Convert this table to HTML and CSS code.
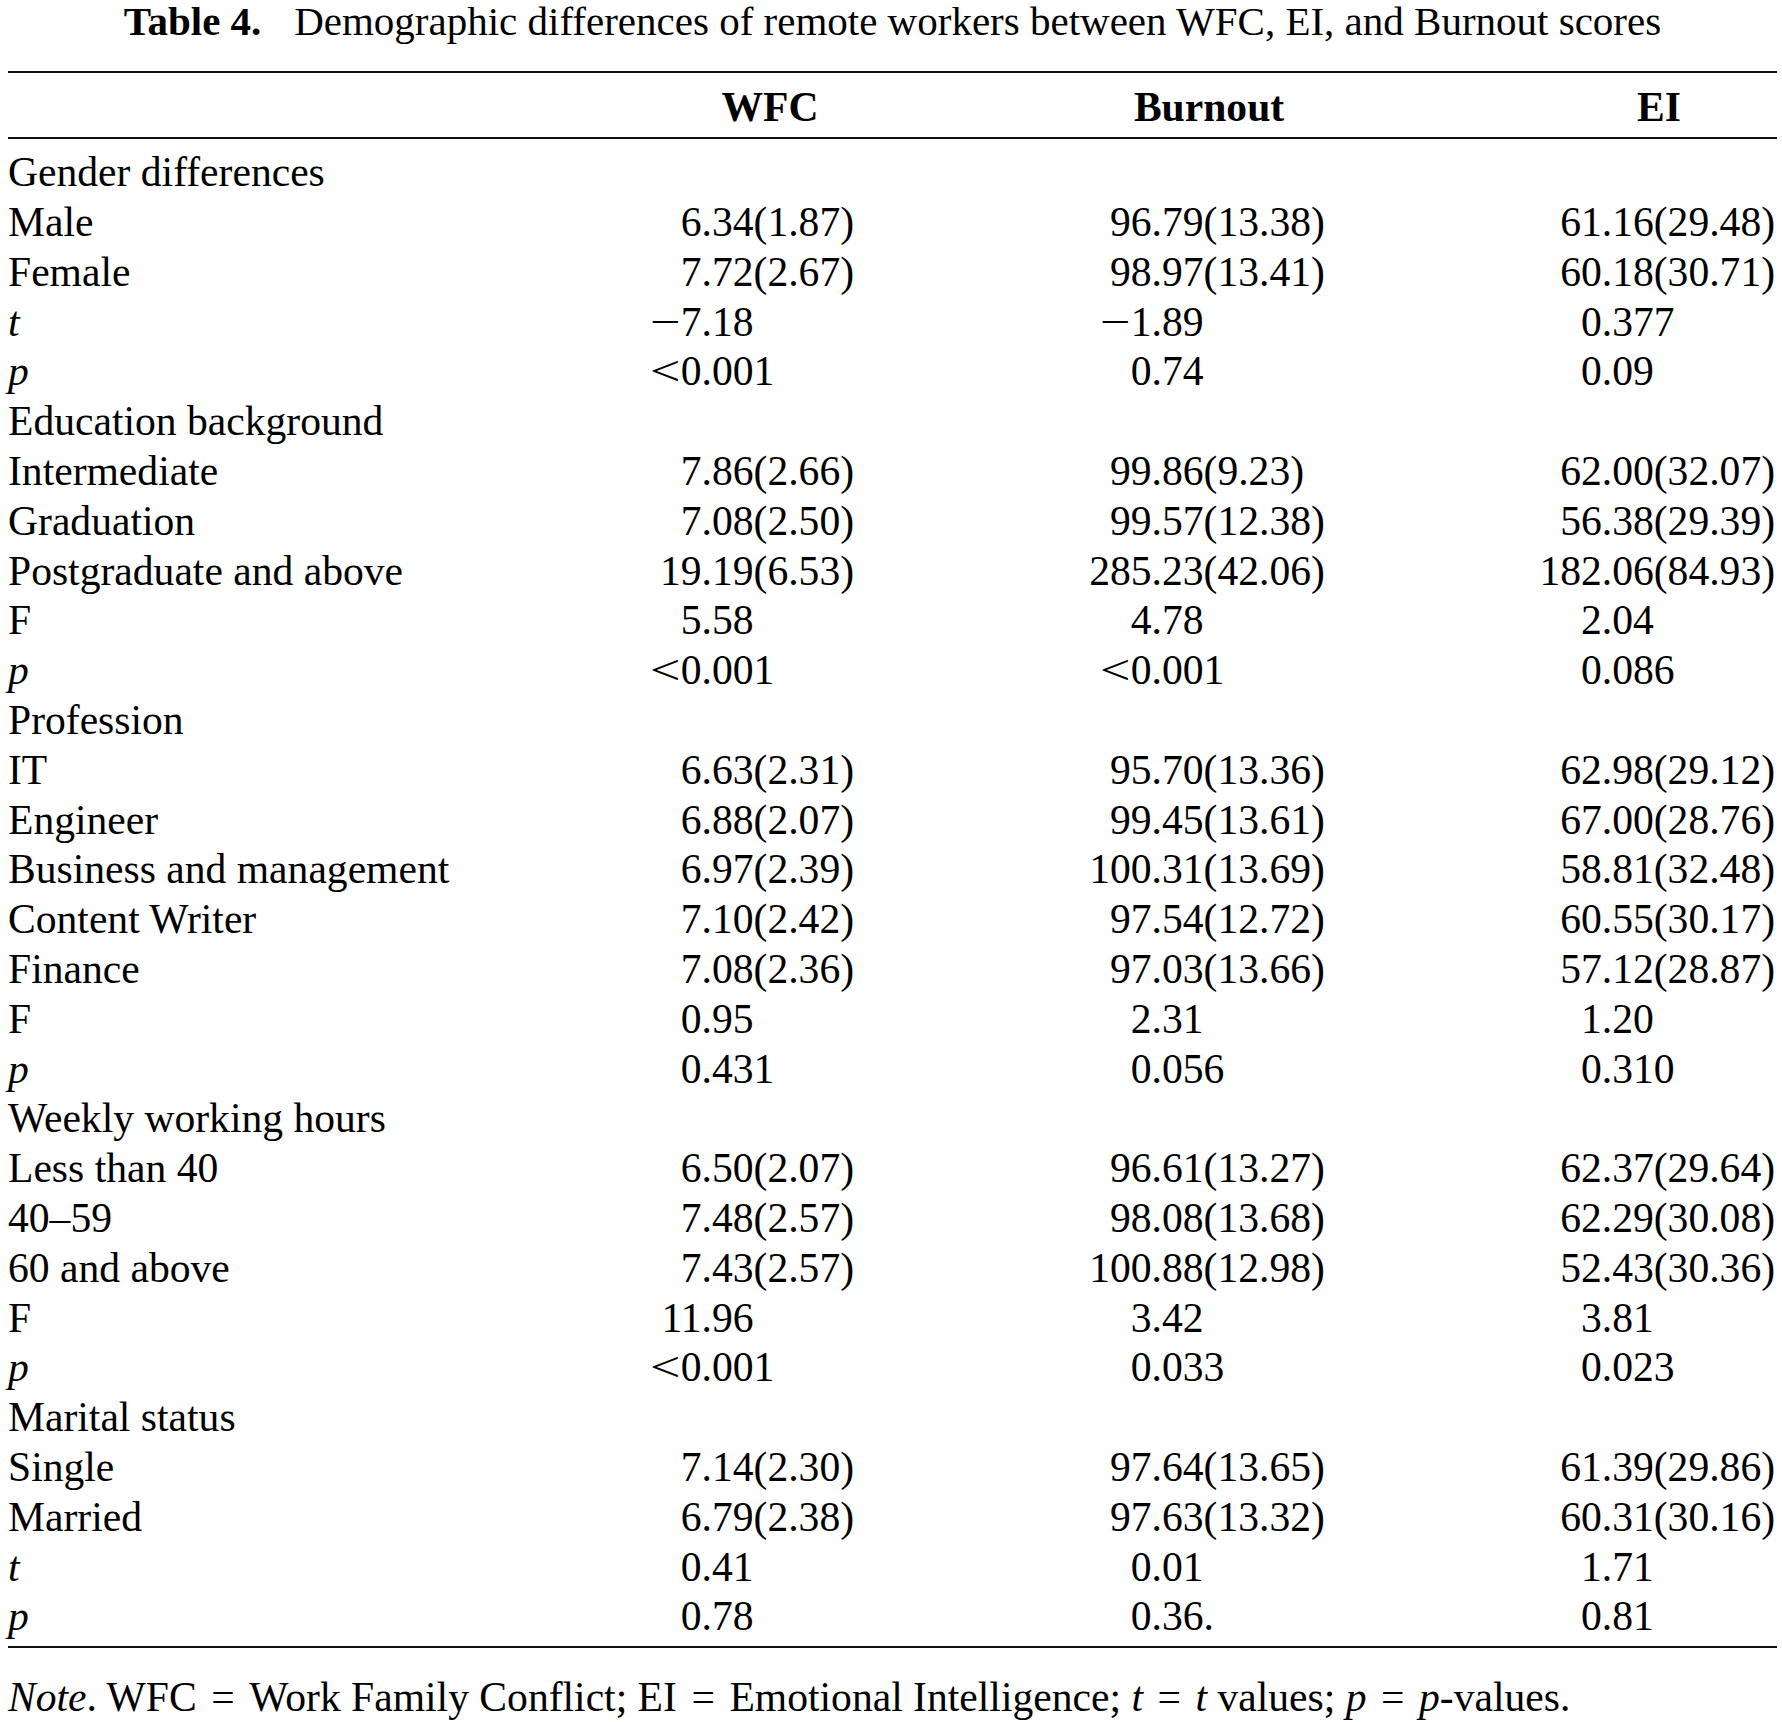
FILE: index.html
```html
<!DOCTYPE html>
<html lang="en">
<head>
<meta charset="utf-8">
<title>Table 4</title>
<link rel="stylesheet" href="styles.css">
</head>
<body>
<div class="page">
  <div class="caption"><b class="cap-label">Table 4.</b> Demographic differences of remote workers between WFC, EI, and Burnout scores</div>
  <div class="table">
    <div class="head">
      <div class="row">
        <div></div>
        <div class="h h-wfc">WFC</div>
        <div class="h h-bo">Burnout</div>
        <div class="h h-ei">EI</div>
      </div>
    </div>
    <div class="body">
      <div class="row"><div class="lab">Gender differences</div><div></div><div></div><div></div></div>
      <div class="row"><div class="lab">Male</div><div class="v"><span class="n">6</span>.34(1.87)</div><div class="v"><span class="n">96</span>.79(13.38)</div><div class="v"><span class="n">61</span>.16(29.48)</div></div>
      <div class="row"><div class="lab">Female</div><div class="v"><span class="n">7</span>.72(2.67)</div><div class="v"><span class="n">98</span>.97(13.41)</div><div class="v"><span class="n">60</span>.18(30.71)</div></div>
      <div class="row"><div class="lab"><i>t</i></div><div class="v"><span class="n"><span class="s">&minus;</span>7</span>.18</div><div class="v"><span class="n"><span class="s">&minus;</span>1</span>.89</div><div class="v"><span class="n">0</span>.377</div></div>
      <div class="row"><div class="lab"><i>p</i></div><div class="v"><span class="n"><span class="s">&lt;</span>0</span>.001</div><div class="v"><span class="n">0</span>.74</div><div class="v"><span class="n">0</span>.09</div></div>

      <div class="row"><div class="lab">Education background</div><div></div><div></div><div></div></div>
      <div class="row"><div class="lab">Intermediate</div><div class="v"><span class="n">7</span>.86(2.66)</div><div class="v"><span class="n">99</span>.86(9.23)</div><div class="v"><span class="n">62</span>.00(32.07)</div></div>
      <div class="row"><div class="lab">Graduation</div><div class="v"><span class="n">7</span>.08(2.50)</div><div class="v"><span class="n">99</span>.57(12.38)</div><div class="v"><span class="n">56</span>.38(29.39)</div></div>
      <div class="row"><div class="lab">Postgraduate and above</div><div class="v"><span class="n">19</span>.19(6.53)</div><div class="v"><span class="n">285</span>.23(42.06)</div><div class="v"><span class="n">182</span>.06(84.93)</div></div>
      <div class="row"><div class="lab">F</div><div class="v"><span class="n">5</span>.58</div><div class="v"><span class="n">4</span>.78</div><div class="v"><span class="n">2</span>.04</div></div>
      <div class="row"><div class="lab"><i>p</i></div><div class="v"><span class="n"><span class="s">&lt;</span>0</span>.001</div><div class="v"><span class="n"><span class="s">&lt;</span>0</span>.001</div><div class="v"><span class="n">0</span>.086</div></div>

      <div class="row"><div class="lab">Profession</div><div></div><div></div><div></div></div>
      <div class="row"><div class="lab">IT</div><div class="v"><span class="n">6</span>.63(2.31)</div><div class="v"><span class="n">95</span>.70(13.36)</div><div class="v"><span class="n">62</span>.98(29.12)</div></div>
      <div class="row"><div class="lab">Engineer</div><div class="v"><span class="n">6</span>.88(2.07)</div><div class="v"><span class="n">99</span>.45(13.61)</div><div class="v"><span class="n">67</span>.00(28.76)</div></div>
      <div class="row"><div class="lab">Business and management</div><div class="v"><span class="n">6</span>.97(2.39)</div><div class="v"><span class="n">100</span>.31(13.69)</div><div class="v"><span class="n">58</span>.81(32.48)</div></div>
      <div class="row"><div class="lab">Content Writer</div><div class="v"><span class="n">7</span>.10(2.42)</div><div class="v"><span class="n">97</span>.54(12.72)</div><div class="v"><span class="n">60</span>.55(30.17)</div></div>
      <div class="row"><div class="lab">Finance</div><div class="v"><span class="n">7</span>.08(2.36)</div><div class="v"><span class="n">97</span>.03(13.66)</div><div class="v"><span class="n">57</span>.12(28.87)</div></div>
      <div class="row"><div class="lab">F</div><div class="v"><span class="n">0</span>.95</div><div class="v"><span class="n">2</span>.31</div><div class="v"><span class="n">1</span>.20</div></div>
      <div class="row"><div class="lab"><i>p</i></div><div class="v"><span class="n">0</span>.431</div><div class="v"><span class="n">0</span>.056</div><div class="v"><span class="n">0</span>.310</div></div>

      <div class="row"><div class="lab">Weekly working hours</div><div></div><div></div><div></div></div>
      <div class="row"><div class="lab">Less than 40</div><div class="v"><span class="n">6</span>.50(2.07)</div><div class="v"><span class="n">96</span>.61(13.27)</div><div class="v"><span class="n">62</span>.37(29.64)</div></div>
      <div class="row"><div class="lab">40&ndash;59</div><div class="v"><span class="n">7</span>.48(2.57)</div><div class="v"><span class="n">98</span>.08(13.68)</div><div class="v"><span class="n">62</span>.29(30.08)</div></div>
      <div class="row"><div class="lab">60 and above</div><div class="v"><span class="n">7</span>.43(2.57)</div><div class="v"><span class="n">100</span>.88(12.98)</div><div class="v"><span class="n">52</span>.43(30.36)</div></div>
      <div class="row"><div class="lab">F</div><div class="v"><span class="n">11</span>.96</div><div class="v"><span class="n">3</span>.42</div><div class="v"><span class="n">3</span>.81</div></div>
      <div class="row"><div class="lab"><i>p</i></div><div class="v"><span class="n"><span class="s">&lt;</span>0</span>.001</div><div class="v"><span class="n">0</span>.033</div><div class="v"><span class="n">0</span>.023</div></div>

      <div class="row"><div class="lab">Marital status</div><div></div><div></div><div></div></div>
      <div class="row"><div class="lab">Single</div><div class="v"><span class="n">7</span>.14(2.30)</div><div class="v"><span class="n">97</span>.64(13.65)</div><div class="v"><span class="n">61</span>.39(29.86)</div></div>
      <div class="row"><div class="lab">Married</div><div class="v"><span class="n">6</span>.79(2.38)</div><div class="v"><span class="n">97</span>.63(13.32)</div><div class="v"><span class="n">60</span>.31(30.16)</div></div>
      <div class="row"><div class="lab"><i>t</i></div><div class="v"><span class="n">0</span>.41</div><div class="v"><span class="n">0</span>.01</div><div class="v"><span class="n">1</span>.71</div></div>
      <div class="row"><div class="lab"><i>p</i></div><div class="v"><span class="n">0</span>.78</div><div class="v"><span class="n">0</span>.36.</div><div class="v"><span class="n">0</span>.81</div></div>
    </div>
  </div>
  <div class="note"><i>Note</i>. WFC<span class="eq">=</span>Work Family Conflict; EI<span class="eq">=</span>Emotional Intelligence; <i>t</i><span class="eq">=</span><i>t</i> values; <i>p</i><span class="eq">=</span><i>p</i>-values.</div>
</div>
</body>
</html>
```
FILE: styles.css
```css
html, body {
  margin: 0;
  padding: 0;
  background: #ffffff;
}

body {
  font-family: "Liberation Serif", "Times New Roman", serif;
  color: #000000;
}

.page {
  width: 1769px;
  padding: 0 0 0 8px;
}

.caption {
  font-size: 41px;
  line-height: 42px;
  text-align: center;
  white-space: nowrap;
  margin-bottom: 29px;
}

.cap-label {
  margin-right: 0.55em;
}

.table {
  font-size: 41.6px;
  line-height: 49.8px;
  border-top: 2px solid #111;
  border-bottom: 2px solid #111;
}

.head {
  padding: 10px 0 4px;
  border-bottom: 2px solid #111;
}

.body {
  padding: 9.4px 0 3.6px;
}

.row {
  display: grid;
  grid-template-columns: 631.2px 450px 450.2px 237.6px;
  height: 49.8px;
  white-space: nowrap;
}

.h {
  font-weight: bold;
}

.h-wfc {
  padding-left: 82.3px;
}

.h-bo {
  padding-left: 44.7px;
}

.h-ei {
  padding-left: 97.7px;
}

.n {
  display: inline-block;
  width: 1.5em;
  text-align: right;
}

.s {
  display: inline-block;
  width: 0.75em;
  text-align: left;
  transform: scaleX(1.3);
  transform-origin: left center;
}

.note {
  font-size: 41.6px;
  line-height: 49.8px;
  margin-top: 25px;
  white-space: nowrap;
}

.eq {
  margin: 0 0.35em;
}
```
